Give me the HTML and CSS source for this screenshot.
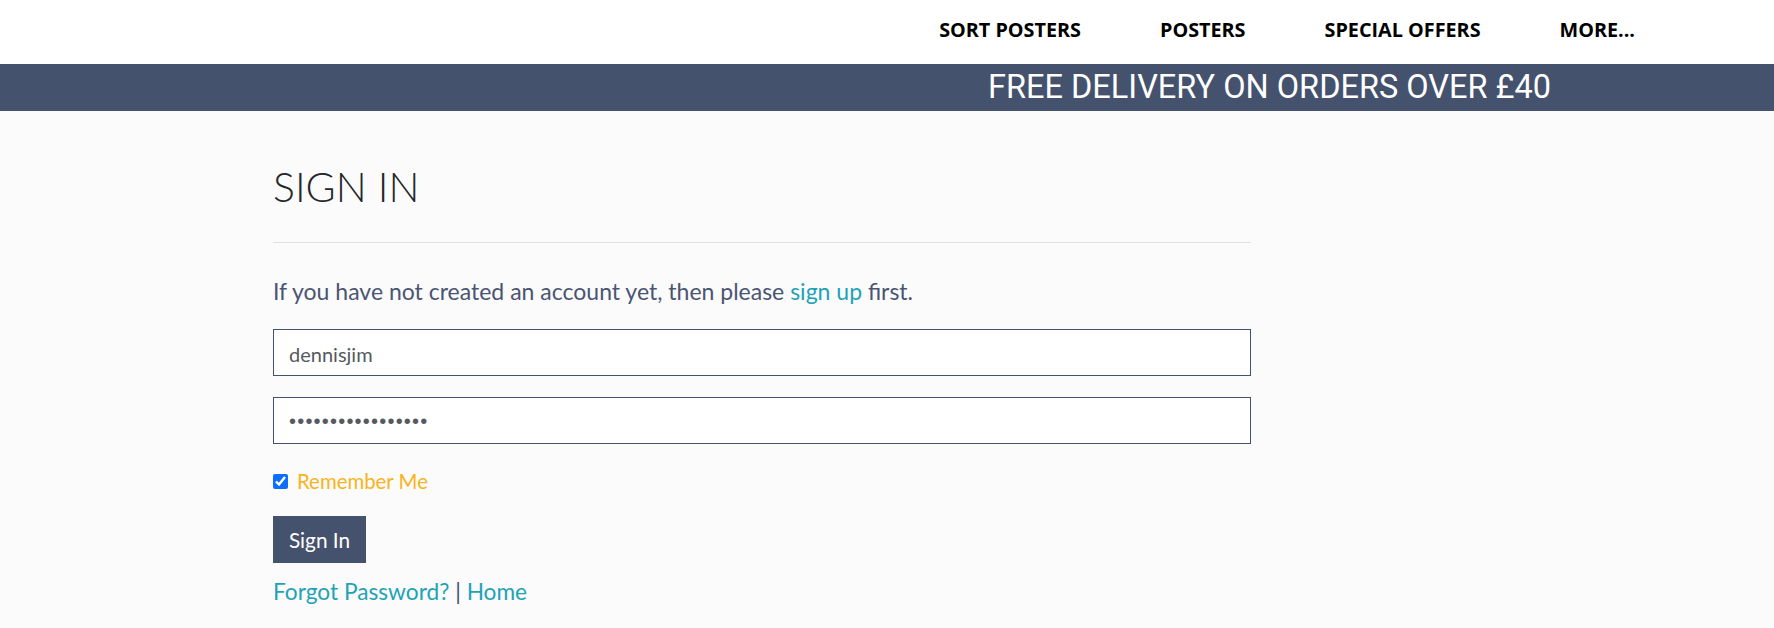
FILE: index.html
```html
<!DOCTYPE html>
<html lang="en">
<head>
<meta charset="utf-8">
<title>Sign In</title>
<link rel="stylesheet" href="styles.css">
</head>
<body>
<header class="topbar">
  <nav class="mainnav">
    <a class="navlink" href="#">SORT POSTERS</a>
    <a class="navlink" href="#">POSTERS</a>
    <a class="navlink" href="#">SPECIAL OFFERS</a>
    <a class="navlink" href="#">MORE...</a>
  </nav>
</header>
<div class="banner">
  <span class="banner-text">FREE DELIVERY ON ORDERS OVER £40</span>
</div>
<main class="content">
  <h1 class="title">SIGN IN</h1>
  <hr class="rule">
  <p class="intro">If you have not created an account yet, then please <a class="link" href="#">sign up</a> first.</p>
  <form class="form">
    <input class="field" type="text" value="dennisjim">
    <input class="field field-pass" type="password" value="dennisjimpassword">
    <label class="remember"><input class="check" type="checkbox" checked> <span>Remember Me</span></label>
    <button class="btn" type="button">Sign In</button>
    <p class="links"><a class="link" href="#">Forgot Password?</a> <span class="sep">|</span> <a class="link" href="#">Home</a></p>
  </form>
</main>
</body>
</html>
```
FILE: styles.css
```css
html, body {
  margin: 0;
  padding: 0;
}
body {
  background: #fbfbfb;
  font-family: "Lato", "Open Sans", sans-serif;
}
.topbar {
  background: #ffffff;
  height: 64px;
}
.mainnav {
  display: flex;
  justify-content: flex-end;
  gap: 79px;
  padding-right: 139px;
  height: 64px;
  align-items: flex-start;
}
.navlink {
  font-family: "Open Sans", sans-serif;
  font-weight: 700;
  font-size: 19.8px;
  line-height: 26px;
  padding-top: 17px;
  color: #000;
  text-decoration: none;
}
.banner {
  background: #45526d;
  height: 47px;
  padding-left: 988px;
  box-sizing: border-box;
}
.banner-text {
  font-family: "Roboto", sans-serif;
  font-size: 32.5px;
  line-height: 47px;
  color: #ffffff;
}
.content {
  margin-left: 273px;
  width: 978px;
  padding-top: 52px;
}
.title {
  font-family: "Lato", sans-serif;
  font-weight: 300;
  font-size: 41px;
  line-height: 48px;
  margin: 0;
  color: #23262b;
}
.rule {
  border: 0;
  border-top: 1px solid #e0e0e0;
  margin: 31px 0 33px;
}
.intro {
  font-size: 23px;
  line-height: 31px;
  color: #4a5572;
  margin: 0 0 22px;
}
.link {
  color: #1ea3b6;
  text-decoration: none;
}
.form {
  display: flex;
  flex-direction: column;
  align-items: flex-start;
}
.field {
  box-sizing: border-box;
  width: 978px;
  height: 47px;
  border: 1px solid #45526d;
  border-radius: 0;
  background: #ffffff;
  padding: 3px 15px 0;
  font-family: "Lato", sans-serif;
  font-size: 20px;
  color: #555a60;
  margin: 0 0 21px;
  outline: none;
}
.field-pass {
  font-family: "Liberation Sans", sans-serif;
  letter-spacing: 1.2px;
  padding-top: 2px;
}
.remember {
  display: flex;
  align-items: center;
  gap: 9px;
  font-size: 20.4px;
  line-height: 26px;
  color: #f8b41c;
  margin-top: 3px;
}
.check {
  margin: 0;
  width: 15px;
  height: 15px;
  accent-color: #0d6efd;
}
.btn {
  margin-top: 22px;
  width: 93px;
  height: 47px;
  border: 0;
  border-radius: 0;
  background: #45526d;
  color: #ffffff;
  font-family: "Lato", sans-serif;
  font-size: 20.8px;
  padding: 0;
}
.links {
  margin: 13px 0 0;
  font-size: 22.7px;
  line-height: 31px;
  color: #45526d;
}
```
